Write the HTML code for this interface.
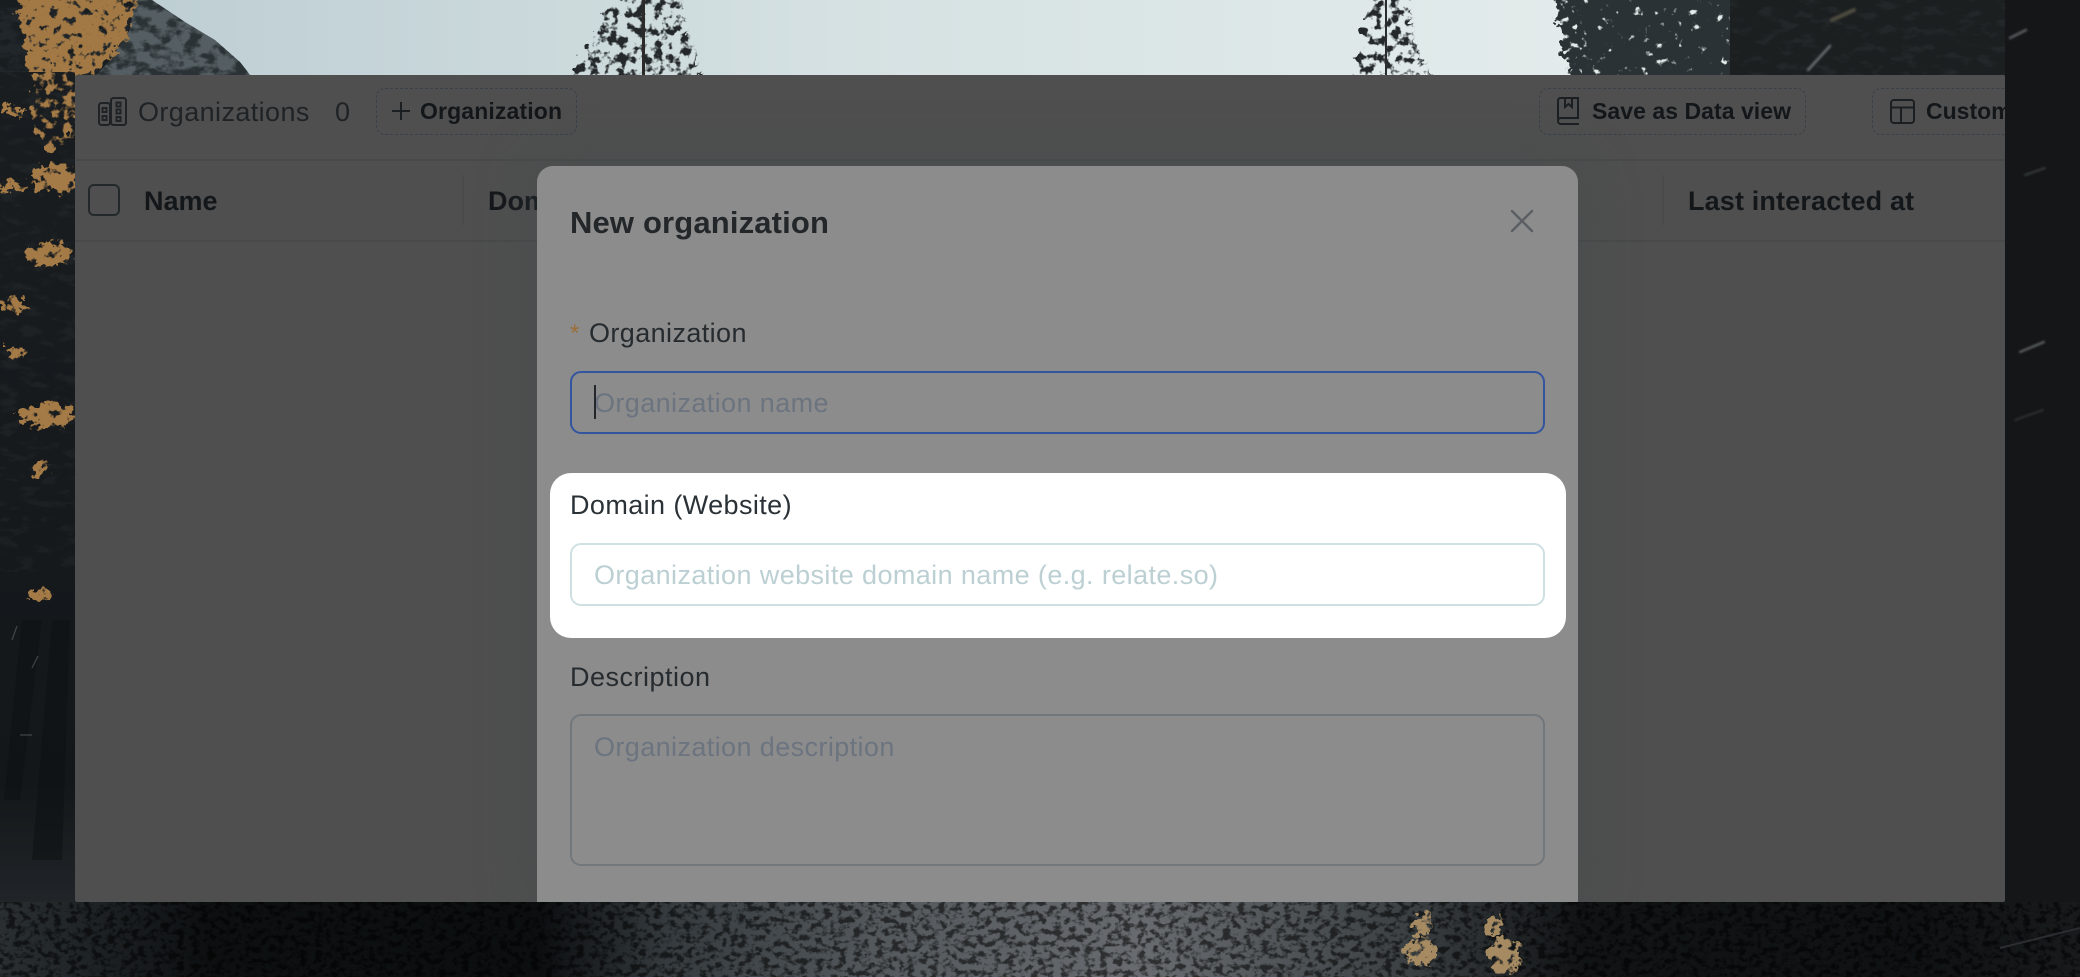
<!DOCTYPE html>
<html lang="en"><head><meta charset="utf-8"><title>New organization</title>
<style>
html,body{margin:0;padding:0;width:2080px;height:977px;overflow:hidden;background:#121618}
body{position:relative;font-family:"Liberation Sans",sans-serif}
svg.bg{position:absolute;left:0;top:0}
.panel{position:absolute;left:75px;top:75px;width:1930px;height:827px;background:#4f4f4f;overflow:hidden;border-radius:2px}
.t{position:absolute;white-space:nowrap;line-height:1}
.line{position:absolute;left:0;width:1930px;height:2px;background:#484a4a}
.vline{position:absolute;width:2px;background:#494b4b;top:100px;height:50px}
.btn{position:absolute;top:13px;height:45px;border:1px dashed #3a4048;border-radius:9px;box-sizing:content-box}
.modal{position:absolute;left:537px;top:166px;width:1041px;height:736px;background:#8c8c8c;border-radius:16px 16px 0 0;box-shadow:0 0 50px 8px rgba(66,76,80,.35);overflow:hidden}
.panelclip{position:absolute;left:75px;top:75px;width:1930px;height:827px;overflow:hidden}
.field{position:absolute;left:570px;width:971px;box-sizing:content-box;border-radius:11px}
.hl{position:absolute;left:550px;top:473px;width:1016px;height:165px;background:#fff;border-radius:21px}
</style></head><body>
<svg class="bg" width="2080" height="977" viewBox="0 0 2080 977" xmlns="http://www.w3.org/2000/svg">
<defs>
<linearGradient id="sky" x1="0" x2="1" y1="0" y2="0"><stop offset="0" stop-color="#bccdd2"/><stop offset=".45" stop-color="#d5e1e2"/><stop offset="1" stop-color="#e6eeed"/></linearGradient>
<linearGradient id="leftg" x1="0" x2="0" y1="0" y2="1"><stop offset="0" stop-color="#191d20"/><stop offset=".85" stop-color="#13171a"/><stop offset="1" stop-color="#22262a"/></linearGradient>
<linearGradient id="rockg" x1="0" x2="1" y1="0" y2="0">
<stop offset="0" stop-color="#2a2f32"/><stop offset=".03" stop-color="#22272a"/><stop offset=".1" stop-color="#0d1011"/><stop offset=".26" stop-color="#0c0f10"/><stop offset=".32" stop-color="#343a3e"/><stop offset=".42" stop-color="#53585c"/><stop offset=".55" stop-color="#686c70"/><stop offset=".68" stop-color="#3a3f42"/><stop offset=".76" stop-color="#111415"/><stop offset=".92" stop-color="#0f1213"/><stop offset="1" stop-color="#181b1c"/></linearGradient>
<filter id="leaf" color-interpolation-filters="sRGB" x="-10%" y="-10%" width="120%" height="120%"><feTurbulence type="fractalNoise" baseFrequency=".11" numOctaves="3" seed="8" result="n"/><feDisplacementMap in="SourceGraphic" in2="n" scale="26" xChannelSelector="R" yChannelSelector="G" result="d"/><feColorMatrix in="n" type="matrix" values="0 0 0 0 0 0 0 0 0 0 0 0 0 0 0 7 0 0 0 -3.4" result="a"/><feComposite in="d" in2="a" operator="in"/></filter>
<filter id="dense" color-interpolation-filters="sRGB" x="-10%" y="-10%" width="120%" height="120%"><feTurbulence type="fractalNoise" baseFrequency=".12" numOctaves="3" seed="11" result="n"/><feDisplacementMap in="SourceGraphic" in2="n" scale="22" xChannelSelector="R" yChannelSelector="G" result="d"/><feColorMatrix in="n" type="matrix" values="0 0 0 0 0 0 0 0 0 0 0 0 0 0 0 8 0 0 0 -2.4" result="a"/><feComposite in="d" in2="a" operator="in"/></filter>
<filter id="dense2" color-interpolation-filters="sRGB" x="-10%" y="-10%" width="120%" height="120%"><feTurbulence type="fractalNoise" baseFrequency=".09" numOctaves="3" seed="29" result="n"/><feDisplacementMap in="SourceGraphic" in2="n" scale="22" xChannelSelector="R" yChannelSelector="G" result="d"/><feColorMatrix in="n" type="matrix" values="0 0 0 0 0 0 0 0 0 0 0 0 0 0 0 8 0 0 0 -2.6" result="a"/><feComposite in="d" in2="a" operator="in"/></filter>
<filter id="speck" color-interpolation-filters="sRGB" x="0" y="0" width="100%" height="100%"><feTurbulence type="fractalNoise" baseFrequency=".06 .09" numOctaves="4" seed="5" result="n"/><feColorMatrix in="n" type="matrix" values="0 0 0 0 0 0 0 0 0 0 0 0 0 0 0 5 0 0 0 -2.2" result="a"/><feComposite in="SourceGraphic" in2="a" operator="in"/></filter>
<filter id="rockf" color-interpolation-filters="sRGB" x="0" y="0" width="100%" height="100%"><feTurbulence type="fractalNoise" baseFrequency=".13 .17" numOctaves="3" seed="14" result="n"/><feColorMatrix in="n" type="matrix" values="0 0 0 0 0 0 0 0 0 0 0 0 0 0 0 5 0 0 0 -2.3" result="a"/><feComposite in="SourceGraphic" in2="a" operator="in"/></filter>
<filter id="speck2" color-interpolation-filters="sRGB" x="0" y="0" width="100%" height="100%"><feTurbulence type="fractalNoise" baseFrequency=".05 .11" numOctaves="4" seed="21" result="n"/><feColorMatrix in="n" type="matrix" values="0 0 0 0 0 0 0 0 0 0 0 0 0 0 0 5 0 0 0 -2.6" result="a"/><feComposite in="SourceGraphic" in2="a" operator="in"/></filter>
<filter id="streak"><feGaussianBlur stdDeviation="1"/></filter>
</defs>
<rect width="2080" height="977" fill="#14181a"/>
<rect x="100" y="0" width="1640" height="80" fill="url(#sky)"/>
<!-- mountain -->
<polygon points="0,0 152,0 185,22 215,40 240,62 254,80 0,80" fill="#555f63"/>
<polygon points="0,0 152,0 185,22 215,40 240,62 254,80 0,80" fill="#1d2326" filter="url(#speck)" opacity=".75"/>
<!-- left foliage -->
<polygon points="0,0 135,0 130,30 110,60 90,82 0,82" fill="#14181b" opacity=".8"/>
<polygon points="15,-10 140,-10 128,35 100,72 30,80" fill="#a27945" filter="url(#dense)"/>
<rect x="0" y="72" width="75" height="840" fill="url(#leftg)"/>
<rect x="0" y="72" width="75" height="500" fill="#2e3337" filter="url(#speck2)" opacity=".3"/>
<g fill="#0e1214" opacity=".6"><polygon points="22,620 42,620 20,800 4,800"/><polygon points="52,620 70,620 62,860 32,860"/></g>
<g fill="#a47a46" filter="url(#leaf)"><ellipse cx="58" cy="105" rx="26" ry="44"/></g>
<g fill="#a47a46" filter="url(#dense)">
<ellipse cx="15" cy="110" rx="10" ry="6"/><ellipse cx="55" cy="178" rx="24" ry="14"/><ellipse cx="50" cy="254" rx="24" ry="12"/><ellipse cx="12" cy="186" rx="14" ry="5"/>
<ellipse cx="15" cy="305" rx="14" ry="7"/><ellipse cx="16" cy="352" rx="10" ry="6"/>
<ellipse cx="48" cy="415" rx="28" ry="12"/><ellipse cx="40" cy="470" rx="9" ry="5"/><ellipse cx="42" cy="595" rx="12" ry="7"/>
</g>
<g stroke="#6f7475" stroke-width="1.2" fill="none" opacity=".5"><path d="M12 640l5-14M32 668l6-12M20 735h12"/></g>
<!-- pines -->
<polygon points="645,-15 680,-15 690,30 706,80 572,80 600,30 612,-15" fill="#24282a" filter="url(#leaf)"/>
<rect x="642" y="-2" width="3" height="78" fill="#2c2a28"/>
<polygon points="1386,-15 1410,-15 1416,40 1436,80 1352,80 1366,40 1368,-15" fill="#24282a" filter="url(#leaf)"/>
<rect x="1385" y="0" width="2" height="76" fill="#2a2c2d"/>
<!-- right trees -->
<polygon points="1552,-10 1760,-10 1760,82 1572,82 1562,45" fill="#2a3235" filter="url(#dense)"/>
<polygon points="1575,-10 1760,-10 1760,82 1585,82" fill="#2a3235" filter="url(#dense2)"/>
<rect x="1730" y="0" width="350" height="80" fill="#1b1f20"/>
<rect x="1730" y="0" width="350" height="80" fill="#33383a" filter="url(#speck2)" opacity=".35"/>
<rect x="2005" y="0" width="75" height="977" fill="#141617"/>
<g fill="none" stroke-linecap="round" filter="url(#streak)">
<path d="M1808 70l22-24" stroke="#6a7072" stroke-width="2.500"/><path d="M1832 20l22-10" stroke="#4e4b40" stroke-width="4"/>
<path d="M2010 38l16-8" stroke="#5c6162" stroke-width="2.500"/><path d="M2025 175l20-7" stroke="#393d3e" stroke-width="2"/>
<path d="M2020 352l24-10" stroke="#6a6f70" stroke-width="2"/><path d="M2015 420l28-10" stroke="#2e3233" stroke-width="2"/>
</g>
<!-- rocks -->
<rect x="0" y="902" width="2080" height="75" fill="url(#rockg)"/>
<rect x="0" y="902" width="2080" height="75" fill="#000" filter="url(#rockf)" opacity=".55"/>
<path d="M2000 948l80-20" stroke="#2a2e30" stroke-width="2" fill="none"/>
<g fill="#a58a62" filter="url(#dense)"><ellipse cx="1422" cy="952" rx="16" ry="14"/><ellipse cx="1505" cy="955" rx="16" ry="18"/><ellipse cx="1422" cy="925" rx="9" ry="10"/><ellipse cx="1495" cy="925" rx="8" ry="10"/></g>
</svg>

<div class="panel">
 <svg style="position:absolute;left:23px;top:22px" width="32" height="30" viewBox="0 0 32 30" fill="none" stroke="#1f2326" stroke-width="2">
  <rect x="1" y="6" width="11" height="22" rx="2.500"/><rect x="13" y="1" width="15" height="27" rx="2.500"/>
  <rect x="4.500" y="11" width="4" height="4"/><rect x="4.500" y="19" width="4" height="4"/>
  <rect x="18.500" y="5.500" width="4" height="4"/><rect x="18.500" y="12.500" width="4" height="4"/><rect x="18.500" y="20" width="4" height="4"/>
 </svg>
 <div class="t" style="left:63px;top:24px;font-size:27px;color:#1f2326;letter-spacing:.4px">Organizations</div>
 <div class="t" style="left:260px;top:24px;font-size:27px;color:#1f2326">0</div>
 <div class="btn" style="left:301px;width:199px"></div>
 <svg style="position:absolute;left:317px;top:27px" width="18" height="18" viewBox="0 0 18 18" stroke="#1b1f22" stroke-width="2"><path d="M9 0v18M0 9h18"/></svg>
 <div class="t" style="left:345px;top:25px;font-size:23px;font-weight:700;color:#14171a;letter-spacing:.13px">Organization</div>
 <div class="btn" style="left:1464px;width:265px"></div>
 <svg style="position:absolute;left:1482px;top:22px" width="23" height="28" viewBox="0 0 23 28" fill="none" stroke="#1b1f22" stroke-width="2"><path d="M1 23V3.500A2.500 2.500 0 0 1 3.500 1H21v20H4a3 3 0 0 0-3 3 3 3 0 0 0 3 3h18"/><path d="M8 1v9l3.500-3 3.500 3V1"/></svg>
 <div class="t" style="left:1517px;top:25px;font-size:23px;font-weight:700;color:#14171a;letter-spacing:.05px">Save as Data view</div>
 <div class="btn" style="left:1797px;width:200px"></div>
 <svg style="position:absolute;left:1815px;top:24px" width="25" height="25" viewBox="0 0 25 25" fill="none" stroke="#1b1f22" stroke-width="2"><rect x="1" y="1" width="23" height="23" rx="3"/><path d="M1 8.500h23M11 8.500V24"/></svg>
 <div class="t" style="left:1851px;top:25px;font-size:23px;font-weight:700;color:#14171a">Customize</div>

 <div class="line" style="top:84px"></div>
 <div class="line" style="top:165px"></div>
 <div style="position:absolute;left:13px;top:109px;width:28px;height:28px;border:2px solid #23282b;border-radius:6px"></div>
 <div class="t" style="left:69px;top:113px;font-size:27px;font-weight:700;color:#14171a">Name</div>
 <div class="vline" style="left:387px"></div>
 <div class="t" style="left:413px;top:113px;font-size:27px;font-weight:700;color:#14171a">Domain</div>
 <div class="vline" style="left:1587px"></div>
 <div class="t" style="left:1613px;top:113px;font-size:27px;font-weight:700;color:#14171a;letter-spacing:.15px">Last interacted at</div>
</div>

<div class="panelclip"><div class="modal" style="left:462px;top:91px"></div></div>

<div class="t" style="left:570px;top:207px;font-size:31px;font-weight:700;color:#23272a;letter-spacing:.15px">New organization</div>
<svg style="position:absolute;left:1510px;top:209px" width="24" height="24" viewBox="0 0 24 24" stroke="#5b5f63" stroke-width="2.400" stroke-linecap="round"><path d="M2 2l20 20M22 2L2 22"/></svg>

<div class="t" style="left:570px;top:322px;font-size:24px;color:#9c6e38">*</div>
<div class="t" style="left:589px;top:320px;font-size:27px;color:#262b2f;letter-spacing:.4px">Organization</div>
<div class="field" style="top:371px;height:59px;border:2px solid #33559f"></div>
<div class="t" style="left:594px;top:390px;font-size:27px;color:#6c7480;letter-spacing:.4px">Organization name</div>
<div style="position:absolute;left:594px;top:385px;width:2px;height:34px;background:#23272b"></div>

<div class="hl"></div>
<div class="t" style="left:570px;top:492px;font-size:27px;color:#2b3237;letter-spacing:.4px">Domain (Website)</div>
<div class="field" style="top:543px;height:59px;border:2px solid #cfe0e2;background:#fff"></div>
<div class="t" style="left:594px;top:562px;font-size:27px;color:#bcd0d3;letter-spacing:.4px">Organization website domain name (e.g. relate.so)</div>

<div class="t" style="left:570px;top:664px;font-size:27px;color:#262b2f;letter-spacing:.5px">Description</div>
<div class="field" style="top:714px;height:148px;border:2px solid #72777c"></div>
<div class="t" style="left:594px;top:734px;font-size:27px;color:#6c7480;letter-spacing:.4px">Organization description</div>
</body></html>
